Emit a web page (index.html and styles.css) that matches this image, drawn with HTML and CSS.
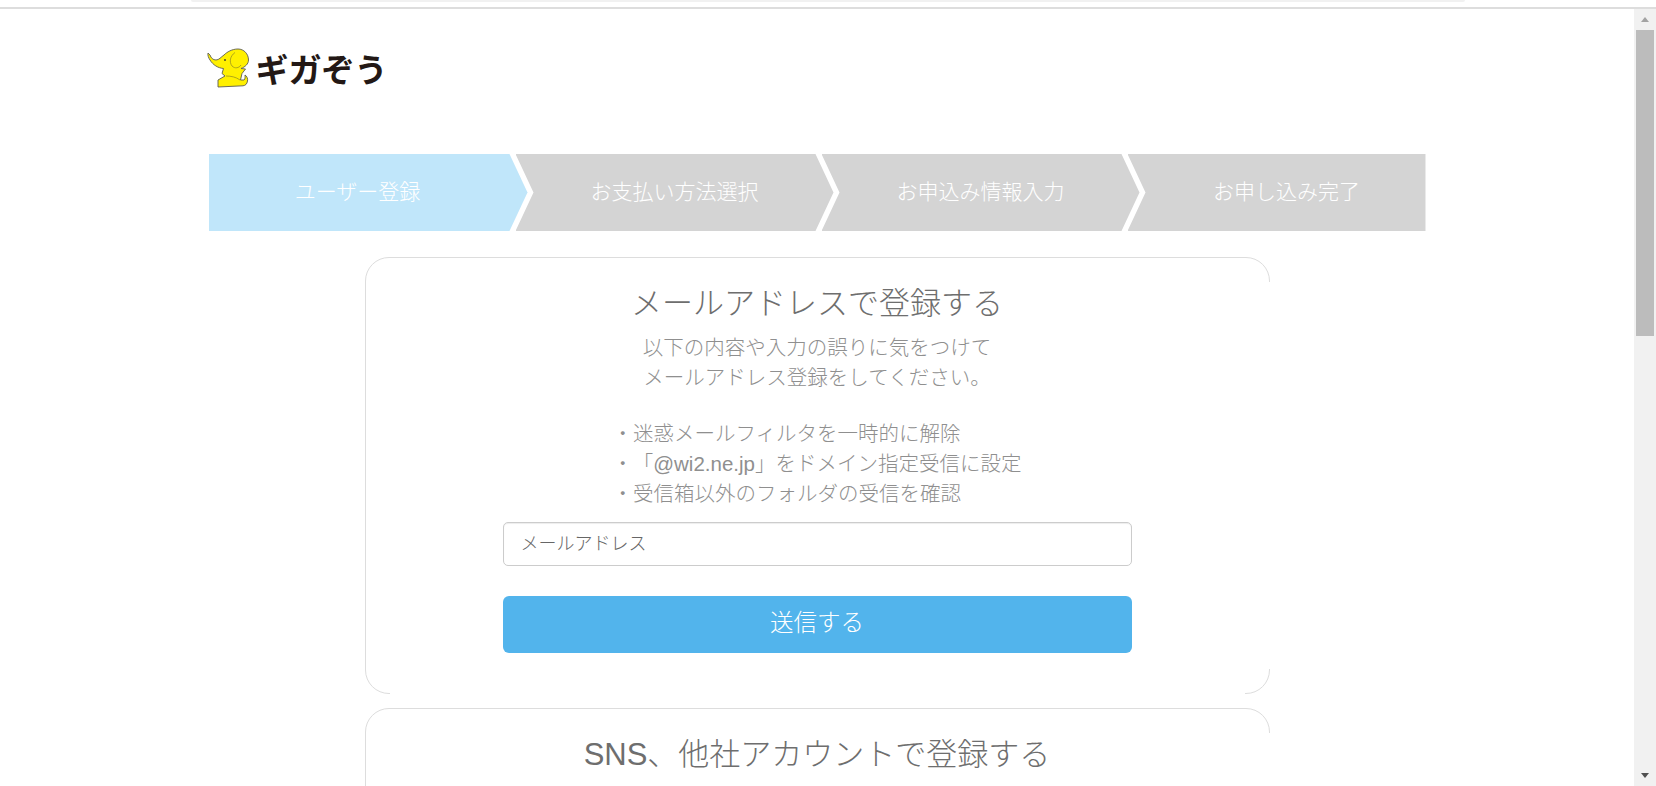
FILE: index.html
```html
<!DOCTYPE html>
<html lang="ja">
<head>
  <meta charset="UTF-8" />
  <title>ギガぞう ユーザー登録</title>
  <meta name="viewport" content="width=device-width, initial-scale=1" />
  <link rel="stylesheet" href="styles.css">
</head>
<body>
  <div class="topbar"><div class="topbar-pill"></div></div>
  <div class="shell">
    <main class="page">
      <header class="logo">
        <svg class="logo-mark" viewBox="0 0 42 41" width="42" height="41" aria-hidden="true">
          <path class="logo-body" d="M1 5L3 7C4 10 6 12 9 12C12 12 14 9 17 7C20 4 25 1 31 1C37 1 41.500 6 41.500 12C41.500 16 38 19 34 20.500L38.500 21L35 25.500L33.500 32H37C38.500 31 38 29 38 27C40 28 41 31 40.500 33C40 36 38.500 37.500 36 37.800L11 39L11 32L18 28L15 25.500L16.500 20.500C11 20 6 17 3 12C1.500 10 0.500 7 1 5Z" />
          <path class="logo-line" d="M28 4.500C23 8 22 14 25 18C28 21 32 20 34 17" />
          <path class="logo-line" d="M19 28C24 28 29 29 33 32" />
          <circle class="logo-eye" cx="18" cy="12" r="0.900" />
        </svg>
        <span class="logo-text">ギガぞう</span>
      </header>

      <ol class="steps">
        <li class="step step-first step-active">ユーザー登録</li>
        <li class="step">お支払い方法選択</li>
        <li class="step">お申込み情報入力</li>
        <li class="step step-last">お申し込み完了</li>
      </ol>

      <section class="card">
        <h2 class="card-title">メールアドレスで登録する</h2>
        <p class="card-lead">以下の内容や入力の誤りに気をつけて<br>メールアドレス登録をしてください。</p>
        <ul class="notes">
          <li>・迷惑メールフィルタを一時的に解除</li>
          <li>・<span class="notes-domain">「@wi2.ne.jp」</span>をドメイン指定受信に設定</li>
          <li>・受信箱以外のフォルダの受信を確認</li>
        </ul>
        <form class="form">
          <input class="field" type="email" placeholder="メールアドレス">
          <button class="submit" type="button">送信する</button>
        </form>
      </section>

      <section class="card">
        <h2 class="card-title">SNS、他社アカウントで登録する</h2>
      </section>
    </main>
    <div class="scrollbar">
      <span class="arrow-up"></span>
      <span class="thumb"></span>
      <span class="arrow-down"></span>
    </div>
  </div>
</body>
</html>
```

FILE: styles.css
```css
:root {
  --blue: #52b4ec;
  --step-blue: #c0e6fa;
  --step-gray: #d4d4d4;
  --line: #dddddd;
  --title: #6e6e6e;
  --text: #8f8f8f;
}
* { box-sizing: border-box; }
html, body { height: 100%; }
body {
  margin: 0;
  display: flex;
  flex-direction: column;
  overflow: hidden;
  background: #fff;
  font-family: "Liberation Sans", "Noto Sans CJK JP", sans-serif;
  font-weight: 300;
  color: var(--text);
}

/* top edge of the window */
.topbar {
  height: 9px;
  flex: none;
  padding: 0 191px;
  border-bottom: 2px solid var(--line);
}
.topbar-pill {
  height: 2px;
  background: #f1f1f1;
  border-radius: 0 0 6px 6px;
}
.shell {
  flex: 1;
  min-height: 0;
  display: flex;
}
.page {
  flex: 1;
  min-width: 0;
  overflow: hidden;
}

/* logo */
.logo {
  width: 1217px;
  height: 145px;
  margin: 0 auto;
  padding: 39px 0 0;
  display: flex;
  align-items: flex-start;
  gap: 7px;
}
.logo-mark { margin-left: -2px; flex: none; }
.logo-body { fill: #fff000; stroke: #5c5c50; stroke-width: 0.900; }
.logo-line { fill: none; stroke: #9a9320; stroke-width: 0.800; }
.logo-eye { fill: #333; }
.logo-text {
  margin-top: 2px;
  font-size: 33px;
  line-height: 41px;
  font-weight: 700;
  color: #231815;
  white-space: nowrap;
}

/* steps */
.steps {
  width: 1217px;
  height: 77px;
  margin: 0 auto;
  padding: 0;
  list-style: none;
  display: flex;
}
.step {
  width: 318px;
  margin-left: -12px;
  padding-bottom: 6px;
  display: flex;
  align-items: center;
  justify-content: center;
  background: var(--step-gray);
  color: #fff;
  font-size: 21px;
  clip-path: polygon(0 0, calc(100% - 18px) 0, 100% 50%, calc(100% - 18px) 100%, 0 100%, 18px 50%);
}
.step-active { background: var(--step-blue); }
.step-first {
  width: 319px;
  margin-left: 0;
  padding-right: 21px;
  clip-path: polygon(0 0, calc(100% - 18px) 0, 100% 50%, calc(100% - 18px) 100%, 0 100%);
}
.step-last {
  flex: 1;
  padding-left: 20px;
  clip-path: polygon(0 0, 100% 0, 100% 100%, 0 100%, 18px 50%);
}

/* cards */
.card {
  position: relative;
  width: 905px;
  margin: 26px auto 0;
  padding: 28px 0 40px;
  border: 1px solid var(--line);
  border-radius: 24px;
  text-align: center;
}
.card + .card { margin-top: 14px; }
/* the straight right and bottom edges don't show in the original */
.card::before {
  content: "";
  position: absolute;
  left: 24px;
  right: 24px;
  bottom: -1px;
  height: 1px;
  background: #fff;
}
.card::after {
  content: "";
  position: absolute;
  top: 24px;
  bottom: 24px;
  right: -1px;
  width: 1px;
  background: #fff;
}
.card-title {
  margin: 0;
  font-size: 31px;
  line-height: 36px;
  font-weight: 300;
  color: var(--title);
}
.card-lead {
  margin: 11px 0 0;
  font-size: 20.500px;
  line-height: 30px;
}
.notes {
  width: fit-content;
  margin: 26px auto 0;
  padding: 0;
  list-style: none;
  font-size: 20.500px;
  line-height: 30px;
  text-align: left;
}
.notes-domain { margin-left: 10px; }

/* form */
.form {
  width: 629px;
  margin: 13px auto 0;
  display: flex;
  flex-direction: column;
  gap: 30px;
}
.field {
  height: 44px;
  padding: 0 17px;
  border: 1px solid #ccc;
  border-radius: 5px;
  box-shadow: inset 0 1px 1px rgba(0, 0, 0, 0.075);
  font: inherit;
  font-size: 18px;
  color: #555;
}
.field::placeholder { color: #666; opacity: 1; }
.submit {
  height: 57px;
  padding: 0 0 7px;
  border: none;
  border-radius: 6px;
  background: var(--blue);
  color: #fff;
  font: inherit;
  font-size: 23.500px;
}

/* window scrollbar */
.scrollbar {
  width: 22px;
  flex: none;
  display: flex;
  flex-direction: column;
  align-items: center;
  background: #f1f1f1;
}
.arrow-up {
  margin-top: 8px;
  border: 4px solid transparent;
  border-top: none;
  border-bottom: 5px solid #a3a3a3;
}
.thumb {
  width: 18px;
  height: 306px;
  margin-top: 8px;
  background: #bcbcbc;
}
.arrow-down {
  margin-top: auto;
  margin-bottom: 8px;
  border: 4px solid transparent;
  border-bottom: none;
  border-top: 5px solid #505050;
}
```
